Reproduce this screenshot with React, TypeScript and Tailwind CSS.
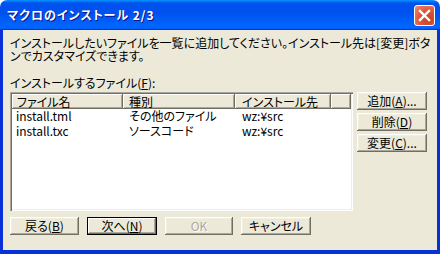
import React from "react";

const font = "font-['Noto_Sans_CJK_JP',sans-serif] [font-feature-settings:'palt']";

function Btn({
  children,
  def,
  disabled,
  className = "",
}: {
  children: React.ReactNode;
  def?: boolean;
  disabled?: boolean;
  className?: string;
}) {
  return (
    <div
      className={
        "flex items-center justify-center h-[18px] bg-[#ECE9D8] text-[12px] leading-none " +
        (def
          ? "border border-black shadow-[inset_-1px_-1px_#716F64,inset_1px_1px_#fff,inset_-2px_-2px_#ACA899] "
          : "shadow-[inset_-1px_-1px_#716F64,inset_1px_1px_#fff,inset_-2px_-2px_#ACA899,inset_2px_2px_#F1EFE2] ") +
        (disabled ? "text-[#ACA899] [text-shadow:1px_1px_#fff] " : "text-black ") +
        className
      }
    >
      {children}
    </div>
  );
}

function U({ children }: { children: React.ReactNode }) {
  return <span className="underline underline-offset-[1px]">{children}</span>;
}

const headCell =
  "flex items-center bg-[#ECE9D8] shadow-[inset_-1px_-1px_#716F64,inset_1px_1px_#fff,inset_-2px_-2px_#ACA899]";

export default function App() {
  const rows = [
    ["install.tml", "その他のファイル", "wz:¥src"],
    ["install.txc", "ソースコード", "wz:¥src"],
  ];
  return (
    <div className={"w-[440px] h-[254px] flex flex-col " + font}>
      <div className="h-[30px] rounded-t-[7px] flex items-center justify-between pl-[7px] pr-[5px] bg-[linear-gradient(to_bottom,#0997FF_0%,#0053EE_10%,#0050EE_40%,#0066FF_88%,#0066FF_92%,#005BFF_95%,#003DD7_97%,#003DD7_100%)]">
        <span className="text-white font-bold text-[12px] tracking-[1px] leading-none [text-shadow:1px_1px_#0F1089]">
          マクロのインストール 2/3
        </span>
        <div className="w-[21px] h-[21px] rounded-[3px] border border-white bg-[radial-gradient(circle_at_70%_70%,#C8401F_0%,#E0573A_50%,#F08E72_100%)] flex items-center justify-center">
          <svg width="13" height="13" viewBox="0 0 13 13">
            <path d="M2 2 L11 11 M11 2 L2 11" stroke="#fff" strokeWidth="2.4" strokeLinecap="square" />
          </svg>
        </div>
      </div>
      <div className="flex-1 bg-[#ECE9D8] border-x-[3px] border-b-[4px] border-[#0831D9] flex flex-col pl-[7px] pr-[10px] pt-[6px] text-[12px] text-black">
        <p className="leading-[13px] whitespace-nowrap">
          インストールしたいファイルを一覧に追加してください。インストール先は[変更]ボタ
          <br />
          ンでカスタマイズできます。
        </p>
        <p className="leading-[13px] mt-[14px]">
          インストールするファイル(<U>F</U>):
        </p>
        <div className="flex gap-[4px] mt-[3px]">
          <div className="flex-1 h-[119px] bg-white shadow-[inset_1px_1px_#ACA899,inset_2px_2px_#716F64,inset_-1px_-1px_#fff,inset_-2px_-2px_#F1EFE2] p-[2px] flex flex-col">
            <div className="flex h-[15px] text-[12px] leading-none">
              <div className={"w-[111px] pl-[5px] " + headCell}>ファイル名</div>
              <div className={"w-[112px] pl-[6px] " + headCell}>種別</div>
              <div className={"w-[96px] pl-[7px] " + headCell}>インストール先</div>
              <div className={"flex-1 " + headCell} />
            </div>
            {rows.map((r) => (
              <div key={r[0]} className="flex h-[15px] items-center leading-none pb-[2px]">
                <div className="w-[111px] pl-[4px]">{r[0]}</div>
                <div className="w-[112px] pl-[6px]">{r[1]}</div>
                <div className="w-[96px] pl-[7px]">{r[2]}</div>
              </div>
            ))}
          </div>
          <div className="w-[70px] flex flex-col gap-[3px]">
            <Btn>
              追加(<U>A</U>)...
            </Btn>
            <Btn>
              削除(<U>D</U>)
            </Btn>
            <Btn>
              変更(<U>C</U>)...
            </Btn>
          </div>
        </div>
        <div className="flex gap-[8px] mt-[6px]">
          <Btn className="w-[69px]">
            戻る(<U>B</U>)
          </Btn>
          <Btn def className="w-[70px]">
            次へ(<U>N</U>)
          </Btn>
          <Btn disabled className="w-[68px]">
            OK
          </Btn>
          <Btn className="w-[70px]">キャンセル</Btn>
        </div>
      </div>
    </div>
  );
}
